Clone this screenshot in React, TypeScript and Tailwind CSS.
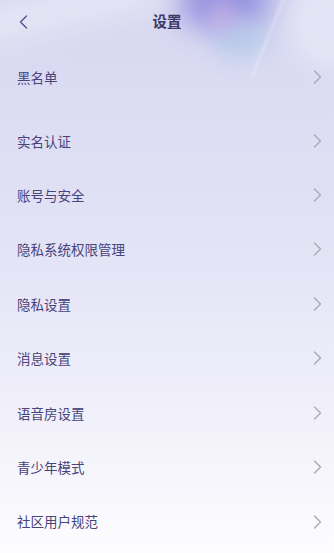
const ITEMS = [
  "黑名单",
  "实名认证",
  "账号与安全",
  "隐私系统权限管理",
  "隐私设置",
  "消息设置",
  "语音房设置",
  "青少年模式",
  "社区用户规范",
];

function Arrow({ dir, className }: { dir: "left" | "right"; className?: string }) {
  return (
    <svg width="9" height="14" viewBox="0 0 9 14" fill="none" className={className}>
      <path
        d={dir === "left" ? "M7.5 1 L1.5 7 L7.5 13" : "M1.5 1 L7.5 7 L1.5 13"}
        stroke="currentColor"
        strokeWidth="1.4"
        strokeLinecap="round"
        strokeLinejoin="round"
      />
    </svg>
  );
}

export default function App() {
  return (
    <div
      className="relative w-[334px] h-[553px] overflow-hidden bg-gradient-to-b from-[#d6d6f0] via-[#e5e5f7] to-[#fdfcfe]"
      style={{ fontFamily: '"Noto Sans CJK SC", "Noto Sans", sans-serif' }}
    >
      {/* decorative background */}
      <div className="absolute -top-[30px] left-[180px] w-[90px] h-[60px] rounded-full bg-[#8482dc] blur-[14px] opacity-80" />
      <div className="absolute top-[22px] left-[215px] w-[50px] h-[35px] rounded-full bg-[#b2cbe9] blur-[12px] opacity-90" />
      <div className="absolute top-[2px] left-[208px] w-[28px] h-[28px] rounded-full bg-[#cfb3e6] blur-[10px] opacity-80" />
      <div className="absolute -top-[20px] left-[290px] w-[80px] h-[90px] rounded-full bg-[#e6e6f7] blur-[10px] opacity-90" />
      <div className="absolute -top-[10px] left-[-40px] w-[200px] h-[40px] rotate-[-12deg] bg-[#ebebf8] blur-[14px] opacity-70" />
      <div className="absolute top-[-10px] left-[268px] w-[2px] h-[90px] rotate-[22deg] bg-white blur-[1.5px] opacity-40" />

      <div className="relative">
        {/* header */}
        <div className="h-[42px] grid grid-cols-[1fr_auto_1fr] items-center">
          <div className="pl-[19px] pt-[1px] text-[#57528c]">
            <Arrow dir="left" />
          </div>
          <span className="text-[14.5px] font-bold text-[#3d3868]">设置</span>
          <div />
        </div>

        <div className="pt-[8px]">
          {ITEMS.map((t, i) => (
            <div
              key={t}
              className={`flex items-center justify-between pl-[17px] pr-[12px] h-[54.43px] ${i === 0 ? "mb-[9px]" : ""}`}
            >
              <span className="text-[13.5px] text-[#48437a]">{t}</span>
              <Arrow dir="right" className="text-[#a9a9b6]" />
            </div>
          ))}
        </div>
      </div>
    </div>
  );
}
